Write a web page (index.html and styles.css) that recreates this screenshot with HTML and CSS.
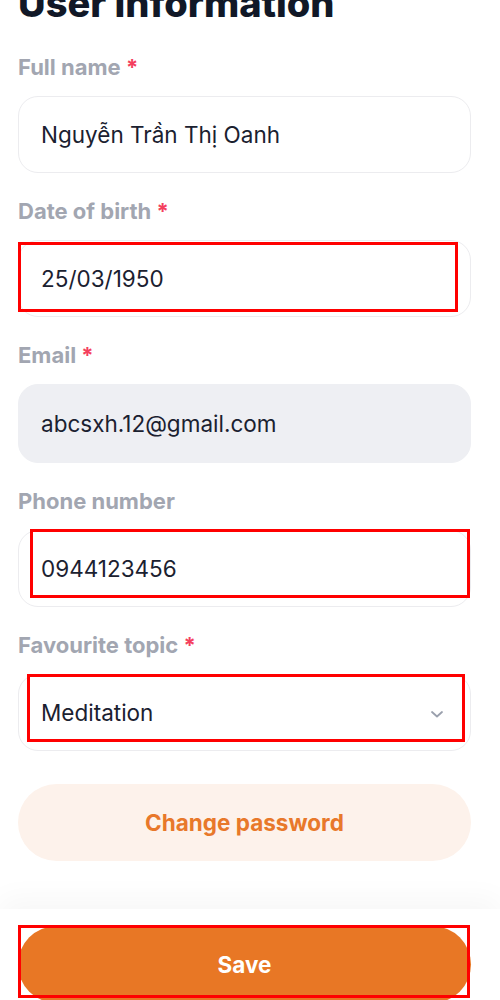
FILE: index.html
```html
<!DOCTYPE html>
<html lang="vi">
<head>
<meta charset="utf-8">
<title>User information</title>
<link rel="stylesheet" href="styles.css">
</head>
<body>
<main class="page">
  <h1 class="title">User information</h1>

  <div class="field">
    <div class="label">Full name <span class="req">*</span></div>
    <div class="input">Nguyễn Trần Thị Oanh</div>
  </div>

  <div class="field">
    <div class="label">Date of birth <span class="req">*</span></div>
    <div class="input-wrap">
      <div class="input">25/03/1950</div>
      <span class="mark mark-dob"></span>
    </div>
  </div>

  <div class="field">
    <div class="label">Email <span class="req">*</span></div>
    <div class="input input-disabled">abcsxh.12@gmail.com</div>
  </div>

  <div class="field">
    <div class="label">Phone number</div>
    <div class="input-wrap">
      <div class="input">0944123456</div>
      <span class="mark mark-phone"></span>
    </div>
  </div>

  <div class="field">
    <div class="label">Favourite topic <span class="req">*</span></div>
    <div class="input-wrap">
      <div class="input input-select">
        <span>Meditation</span>
        <svg class="chevron" width="14" height="10" viewBox="0 0 14 10" fill="none" stroke="#9aa0ad" stroke-width="1.8" stroke-linecap="round" stroke-linejoin="round"><path d="M2 3l5 4.5L12 3"/></svg>
      </div>
      <span class="mark mark-topic"></span>
    </div>
  </div>

  <button class="btn btn-soft">Change password</button>
</main>

<footer class="footer">
  <div class="input-wrap">
    <button class="btn btn-primary">Save</button>
    <span class="mark mark-save"></span>
  </div>
</footer>
</body>
</html>
```

FILE: styles.css
```css
html, body {
  margin: 0;
  padding: 0;
  background: #ffffff;
  overflow: hidden;
}

body {
  font-family: Inter, "Noto Sans", "Liberation Sans", sans-serif;
  color: #1b2130;
}

.page {
  padding: 0 29px 0 18px;
  display: flex;
  flex-direction: column;
}

.title {
  margin: -17px 0 0;
  font-size: 38px;
  line-height: 40px;
  font-weight: 800;
  color: #111827;
}

.field {
  display: flex;
  flex-direction: column;
  gap: 15px;
  margin-top: 24px;
}

.field:first-of-type {
  margin-top: 30px;
}

.label {
  font-size: 22px;
  line-height: 28px;
  font-weight: 700;
  color: #a2a6b1;
}

.req {
  color: #f43f5e;
}

.input-wrap {
  position: relative;
}

.input {
  box-sizing: border-box;
  height: 77px;
  border: 1px solid #ececef;
  border-radius: 20px;
  padding: 0 22px;
  display: flex;
  align-items: center;
  font-size: 22.5px;
  color: #1b2130;
  background: #ffffff;
}

.input-disabled {
  background: #eeeff3;
  border-color: #eeeff3;
  height: 79px;
}

.input-select {
  justify-content: space-between;
  padding-right: 26px;
}

.chevron {
  display: block;
  margin-top: 2px;
}

.mark {
  position: absolute;
  box-sizing: border-box;
  border: 3px solid #ff0000;
  pointer-events: none;
}

.mark-dob {
  left: 0;
  top: 2px;
  width: 440px;
  height: 70px;
}

.mark-phone {
  left: 12px;
  top: -1px;
  width: 440px;
  height: 69px;
}

.mark-topic {
  left: 9px;
  top: 0;
  width: 438px;
  height: 68px;
}

.mark-save {
  left: 0;
  top: -1px;
  width: 452px;
  height: 73px;
}

.btn {
  display: block;
  width: 100%;
  height: 77px;
  border: none;
  border-radius: 40px;
  font-family: inherit;
  font-size: 22.5px;
  font-weight: 700;
  cursor: pointer;
}

.btn-soft {
  margin-top: 33px;
  background: #fdf2eb;
  color: #e8782a;
}

.btn-primary {
  background: #e87725;
  color: #ffffff;
}

.footer {
  margin-top: 48px;
  padding: 17px 29px 0 18px;
  background: #ffffff;
  box-shadow: 0 -10px 28px rgba(0, 0, 0, 0.035);
}
```
